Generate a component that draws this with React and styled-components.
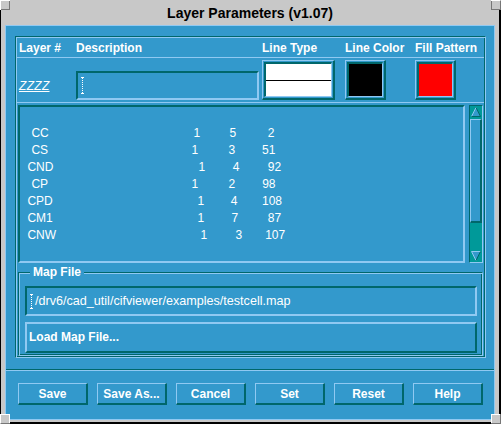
import styled, { createGlobalStyle, css } from 'styled-components'

const BLUE = '#3399cc'
const DARK = '#00676b'
const LIGHT = '#90c9f2'
const TEAL = '#009999'
const GRAY = '#c8c8c8'

const GlobalStyle = createGlobalStyle`
  *, *::before, *::after { box-sizing: border-box; }
  html, body { margin: 0; padding: 0; background: #000; }
  body { font-family: "Liberation Sans", Arial, sans-serif; }
`

const sunken = css`
  border-style: solid;
  border-color: ${DARK} ${LIGHT} ${LIGHT} ${DARK};
`
const raised = css`
  border-style: solid;
  border-color: ${LIGHT} ${DARK} ${DARK} ${LIGHT};
`
const etched = css`
  border: 1px solid;
  border-color: ${DARK} ${LIGHT} ${LIGHT} ${DARK};
  box-shadow: inset 1px 1px 0 ${LIGHT}, inset -1px -1px 0 ${DARK};
`

const Screen = styled.div`
  position: relative;
  width: 501px;
  height: 424px;
  background: #000;
  padding: 0 2px 2px 1px;
  display: flex;
`

const Frame = styled.div`
  flex: 1;
  display: flex;
  flex-direction: column;
  background: ${GRAY};
  padding: 0 4px 2px 4px;
`

const corners = {
  tl: css`top: 0; left: 0; border-top: 1px solid #fff; border-left: 1px solid #fff; box-shadow: inset -1px -1px 0 #777;`,
  tr: css`top: 0; right: 0; border-top: 1px solid #fff; border-right: 1px solid #777; box-shadow: inset 1px -1px 0 #777;`,
  bl: css`bottom: 0; left: 0; border-left: 1px solid #fff; border-bottom: 1px solid #777; box-shadow: inset -1px 1px 0 #fff;`,
  br: css`bottom: 0; right: 0; border-right: 1px solid #777; border-bottom: 1px solid #777; box-shadow: inset 1px 1px 0 #fff;`,
}

const Corner = styled.div`
  position: absolute;
  width: 10px;
  height: 10px;
  background: ${GRAY};
  ${p => corners[p.$at]}
`

const TitleBar = styled.div`
  height: 25px;
  display: flex;
  align-items: center;
  justify-content: center;
  font: bold 14px "Liberation Sans", Arial, sans-serif;
  color: #000;
`

const Client = styled.div`
  flex: 1;
  display: flex;
  flex-direction: column;
  background: ${BLUE};
  border: 1px solid ${LIGHT};
  color: #fff;
`

const OuterFrame = styled.div`
  ${etched};
  margin: 10px 8px 0 9px;
  display: flex;
  flex-direction: column;
  padding: 1px;
`

const Columns = styled.div`
  display: grid;
  grid-template-columns: 57px 186px 83px 70px 1fr;
  padding-left: 2px;
  border-bottom: 1px solid ${LIGHT};
`

const HeaderRow = styled(Columns)`
  height: 20px;
  align-items: center;
  font: bold 12px "Liberation Sans", Arial, sans-serif;
`

const EditRow = styled(Columns)`
  height: 45px;
  align-items: end;
  padding-bottom: 2px;
`

const LayerName = styled.div`
  height: 29px;
  display: flex;
  align-items: center;
  font: italic 12px "Liberation Sans", Arial, sans-serif;
  text-decoration: underline;
  letter-spacing: 0.3px;
`

const TextField = styled.div`
  ${sunken};
  border-width: 2px;
  width: ${p => p.$w}px;
  height: ${p => p.$h}px;
  display: flex;
  align-items: center;
  padding-left: 3px;
  font: 12.6px "Liberation Sans", Arial, sans-serif;
`

const Swatch = styled.div`
  ${raised};
  border-width: 1px 2px 2px 1px;
  width: ${p => p.$w}px;
  height: 40px;
  padding: 1px;
`

const SwatchFill = styled.div`
  ${sunken};
  border-width: 2px 1px 1px 2px;
  height: 100%;
  background: ${p => p.$color};
  display: flex;
  align-items: center;
`

const LineSample = styled.div`
  width: 100%;
  height: 1px;
  background: #000;
`

const ListArea = styled.div`
  display: flex;
  gap: 4px;
  height: 158px;
  margin: 2px 0 0 1px;
`

const List = styled.div`
  ${sunken};
  border-width: 2px;
  flex: 1;
  padding-top: 17px;
  font: 12px "Liberation Sans", Arial, sans-serif;
`

const ListRow = styled.div`
  display: grid;
  grid-template-columns: 170px 36px 36px 1fr;
  height: 17px;
  align-items: center;
  white-space: pre;
`

const Cell = styled.span`
  padding-left: ${p => p.$indent}px;
`

const ScrollBar = styled.div`
  ${sunken};
  border-width: 1px;
  width: 14px;
  display: flex;
  flex-direction: column;
  background: ${TEAL};
  margin-right: 1px;
`

const Arrow = styled.svg`
  display: block;
  width: 12px;
  height: 12px;
  flex: none;
`

const Slider = styled.div`
  ${raised};
  border-width: 1px 2px 2px 1px;
  height: 104px;
  margin-top: 1px;
  background: ${BLUE};
`

const Trough = styled.div`
  flex: 1;
`

const MapFrame = styled.fieldset`
  ${etched};
  margin: 2px 1px 0 1px;
  padding: 7px 5px 2px 6px;
  min-width: 0;
`

const Legend = styled.legend`
  margin-left: 5px;
  padding: 0 3px;
  background: ${BLUE};
  font: bold 12px/14px "Liberation Sans", Arial, sans-serif;
`

const LoadButton = styled.div`
  ${raised};
  border-width: 2px;
  height: 31px;
  margin-top: 6px;
  display: flex;
  align-items: center;
  padding: 0 0 2px 2px;
  font: bold 12px "Liberation Sans", Arial, sans-serif;
`

const Separator = styled.div`
  height: 2px;
  margin-top: 11px;
  border-top: 1px solid ${DARK};
  border-bottom: 1px solid ${LIGHT};
`

const ButtonRow = styled.div`
  display: flex;
  gap: 9px;
  margin-top: 12px;
  padding-left: 12px;
`

const Button = styled.button`
  ${raised};
  border-width: 1px 2px 2px 1px;
  width: 70px;
  height: 22px;
  padding: 0;
  background: ${BLUE};
  color: #fff;
  font: bold 12px "Liberation Sans", Arial, sans-serif;
`

const PathText = styled.span`
  margin-left: 1px;
`

function Caret({ h }) {
  return (
    <svg width="4" height={h} style={{ flex: 'none' }}>
      <path d={`M0 0.5h3M0 ${h - 0.5}h3`} stroke="#fff" />
      <line x1="1.5" y1="1" x2="1.5" y2={h - 1} stroke="#fff" strokeDasharray="1 1" />
    </svg>
  )
}

const rows = [
  { name: 'CC', at: 11.4, v: [['1', 3.5], ['5', 3.5], ['2', 5.8]] },
  { name: 'CS', at: 11.4, v: [['1', 1.5], ['3', 2.5], ['51', 0]] },
  { name: 'CND', at: 7.4, v: [['1', 8.5], ['4', 6.7], ['92', 5.8]] },
  { name: 'CP', at: 11.4, v: [['1', 1.5], ['2', 2.5], ['98', 0.2]] },
  { name: 'CPD', at: 7.4, v: [['1', 7.5], ['4', 4.7], ['108', 0]] },
  { name: 'CM1', at: 7.4, v: [['1', 7.5], ['7', 5.5], ['87', 5.8]] },
  { name: 'CNW', at: 7.4, v: [['1', 10.5], ['3', 9.5], ['107', 3.2]] },
]

const buttons = ['Save', 'Save As...', 'Cancel', 'Set', 'Reset', 'Help']

export default function App() {
  return (
    <>
      <GlobalStyle />
      <Screen>
        <Frame>
          <TitleBar>Layer Parameters (v1.07)</TitleBar>
          <Client>
            <OuterFrame>
              <HeaderRow>
                <span>Layer #</span>
                <span>Description</span>
                <span>Line Type</span>
                <span>Line Color</span>
                <span>Fill Pattern</span>
              </HeaderRow>

              <EditRow>
                <LayerName>ZZZZ</LayerName>
                <TextField $w={183} $h={29}>
                  <Caret h={17} />
                </TextField>
                <Swatch $w={73}>
                  <SwatchFill $color="#fff">
                    <LineSample />
                  </SwatchFill>
                </Swatch>
                <Swatch $w={41}>
                  <SwatchFill $color="#000" />
                </Swatch>
                <Swatch $w={41}>
                  <SwatchFill $color="#ff0000" />
                </Swatch>
              </EditRow>

              <ListArea>
                <List>
                  {rows.map(r => (
                    <ListRow key={r.name}>
                      <Cell $indent={r.at}>{r.name}</Cell>
                      {r.v.map(([n, i], k) => (
                        <Cell key={k} $indent={i}>{n}</Cell>
                      ))}
                    </ListRow>
                  ))}
                </List>
                <ScrollBar>
                  <Arrow viewBox="0 0 12 12">
                    <path d="M6 1.5L10.5 10.5H1.5Z" fill={BLUE} />
                    <path d="M1.5 10.5L6 1.5" stroke={LIGHT} fill="none" />
                    <path d="M6 1.5L10.5 10.5H1.5" stroke={DARK} fill="none" />
                  </Arrow>
                  <Slider />
                  <Trough />
                  <Arrow viewBox="0 0 12 12">
                    <path d="M1.5 1.5H10.5L6 10.5Z" fill={BLUE} />
                    <path d="M6 10.5L1.5 1.5H10.5" stroke={LIGHT} fill="none" />
                    <path d="M10.5 1.5L6 10.5" stroke={DARK} fill="none" />
                  </Arrow>
                </ScrollBar>
              </ListArea>

              <MapFrame>
                <Legend>Map File</Legend>
                <TextField $h={30}>
                  <Caret h={15} />
                  <PathText>/drv6/cad_util/cifviewer/examples/testcell.map</PathText>
                </TextField>
                <LoadButton>Load Map File...</LoadButton>
              </MapFrame>
            </OuterFrame>

            <Separator />

            <ButtonRow>
              {buttons.map(b => (
                <Button key={b}>{b}</Button>
              ))}
            </ButtonRow>
          </Client>
        </Frame>
        <Corner $at="tl" />
        <Corner $at="tr" />
        <Corner $at="bl" />
        <Corner $at="br" />
      </Screen>
    </>
  )
}
